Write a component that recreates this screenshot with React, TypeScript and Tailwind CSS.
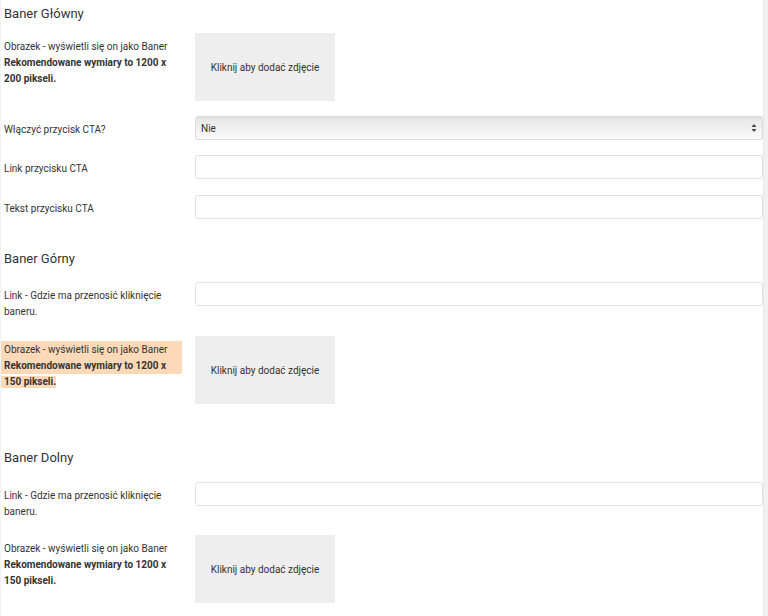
import React from "react";

const font = { fontFamily: "Roboto, 'Noto Sans', sans-serif" };

function Label({ children }: { children: React.ReactNode }) {
  return (
    <div className="w-[194px] shrink-0 pt-[6px] pl-[3px] pr-3 text-[10px] leading-[16px] text-[#333]">
      {children}
    </div>
  );
}

function ImageBox() {
  return (
    <div className="w-[140px] h-[68px] bg-[#eeeeee] flex items-center justify-center text-[10px] text-[#333]">
      Kliknij aby dodać zdjęcie
    </div>
  );
}

function TextInput() {
  return (
    <input
      type="text"
      className="w-full h-6 border border-[#e2e2e2] rounded-[3px] bg-white outline-none"
    />
  );
}

function Heading({ children, className }: { children: React.ReactNode; className?: string }) {
  return (
    <div className={"pl-[3px] text-[13px] leading-[18px] text-[#333] " + (className ?? "")}>
      {children}
    </div>
  );
}

function Row({ label, children, className }: { label: React.ReactNode; children: React.ReactNode; className?: string }) {
  return (
    <div className={"flex items-start " + (className ?? "mb-[15px]")}>
      <Label>{label}</Label>
      <div className="flex-1">{children}</div>
    </div>
  );
}

function ObrazekLabel({ size }: { size: string }) {
  return (
    <>
      Obrazek - wyświetli się on jako Baner
      <br />
      <b className="font-bold">Rekomendowane wymiary to 1200 x {size} pikseli.</b>
    </>
  );
}

export default function App() {
  return (
    <div className="w-[768px] h-[616px] overflow-hidden bg-white flex" style={font}>
      <div className="flex-1 pt-[5px] border-l border-[#f3f3f3]">
        <Heading className="mb-[10px]">Baner Główny</Heading>
        <Row label={<ObrazekLabel size="200" />}>
          <ImageBox />
        </Row>
        <Row label="Włączyć przycisk CTA?">
          <div className="relative w-full h-6 border border-[#dcdcdc] rounded-[3px] bg-gradient-to-b from-[#e6e6e6] to-[#fafafa] shadow-[inset_0_1px_1px_rgba(0,0,0,0.05)] flex items-center pl-[5px] text-[10px] text-[#333]">
            Nie
            <svg className="absolute right-[5px] top-1/2 -translate-y-1/2" width="6" height="9" viewBox="0 0 6 9">
              <path d="M3 0.5 L5.5 3.5 H0.5 Z" fill="#444" />
              <path d="M3 8.5 L5.5 5.5 H0.5 Z" fill="#444" />
            </svg>
          </div>
        </Row>
        <Row label="Link przycisku CTA" className="mb-[16px]">
          <TextInput />
        </Row>
        <Row label="Tekst przycisku CTA" className="mb-[31px]">
          <TextInput />
        </Row>

        <Heading className="mb-[14px]">Baner Górny</Heading>
        <Row label={<>Link - Gdzie ma przenosić kliknięcie baneru.</>} className="mb-[16px]">
          <TextInput />
        </Row>
        <Row
          label={
            <div className="-ml-[3px] -mt-px w-[181px]">
              <div className="bg-[#fed9b7] pl-[3px] pt-px whitespace-nowrap">Obrazek - wyświetli się on jako Baner</div>
              <div className="bg-[#fed9b7] pl-[3px] font-bold whitespace-nowrap">Rekomendowane wymiary to 1200 x</div>
              <div className="font-bold">
                <span className="bg-[#fed9b7] pl-[3px] pb-[1px]">150 pikseli.</span>
              </div>
            </div>
          }
          className="mb-[45px]"
        >
          <ImageBox />
        </Row>

        <Heading className="mb-[15px]">Baner Dolny</Heading>
        <Row label={<>Link - Gdzie ma przenosić kliknięcie baneru.</>} className="mb-[15px]">
          <TextInput />
        </Row>
        <Row label={<ObrazekLabel size="150" />}>
          <ImageBox />
        </Row>
      </div>
      <div className="w-[5px] bg-[#f1f1f1] border-l border-[#e8e8e8]" />
    </div>
  );
}
